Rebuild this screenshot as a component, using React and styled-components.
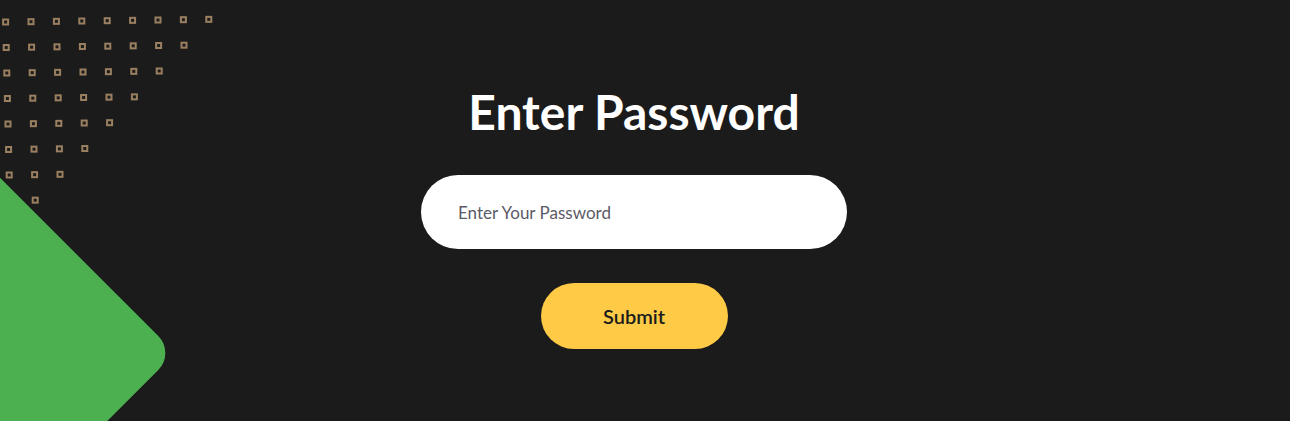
import React from "react";
import styled, { createGlobalStyle } from "styled-components";

const Global = createGlobalStyle`
  html, body { margin: 0; padding: 0; background: #1b1b1b; }
  body { font-family: Lato, "Open Sans", sans-serif; }
  * { box-sizing: border-box; }
`;

const Page = styled.main`
  position: relative;
  width: 1290px;
  height: 421px;
  overflow: hidden;
  background: #1b1b1b;
  display: flex;
  flex-direction: column;
  align-items: center;
  padding-top: 82px;
  padding-right: 22px;
`;

const Diamond = styled.div`
  position: absolute;
  width: 320px;
  height: 320px;
  left: ${175 - 160 * Math.SQRT2 - 160}px;
  top: ${353 - 160}px;
  background: #4caf50;
  border-radius: 24px;
  transform: rotate(45deg);
`;

const Dots = styled.svg`
  position: absolute;
  left: 0;
  top: 0;
  width: 240px;
  height: 220px;
`;

const Title = styled.h1`
  margin: 0;
  font-family: Lato, sans-serif;
  font-weight: 700;
  font-size: 48px;
  line-height: 60px;
  color: #ffffff;
  position: relative;
`;

const Form = styled.form`
  display: flex;
  flex-direction: column;
  align-items: center;
  gap: 34px;
  margin-top: 33px;
  position: relative;
`;

const Input = styled.input`
  width: 426px;
  height: 74px;
  border: none;
  border-radius: 37px;
  background: #ffffff;
  padding: 0 37px;
  font-family: Lato, sans-serif;
  font-size: 17px;
  color: #333;
  outline: none;
  &::placeholder { color: #5b5a66; }
`;

const Button = styled.button`
  width: 187px;
  height: 66px;
  border: none;
  border-radius: 33px;
  background: #ffcb47;
  font-family: Lato, sans-serif;
  font-weight: 600;
  font-size: 20px;
  color: #1b1b1b;
  cursor: pointer;
`;

const dots = [];
for (let r = 0; r <= 8; r++) {
  for (let c = 0; c < 10 - r; c++) {
    const x = 5 + 25.4 * c + 0.6 * r;
    const y = -3.5 + 25.5 * r - 0.33 * c;
    dots.push([x, y]);
  }
}

export default function App() {
  return (
    <>
      <Global />
      <Page>
        <Dots viewBox="0 0 240 220">
          {dots.map(([x, y], i) => (
            <rect
              key={i}
              x={x - 2.5}
              y={y - 2.5}
              width="5"
              height="5"
              fill="none"
              stroke="#9a8060"
              strokeWidth="2"
            />
          ))}
        </Dots>
        <Diamond />
        <Title>Enter Password</Title>
        <Form onSubmit={(e) => e.preventDefault()}>
          <Input type="password" placeholder="Enter Your Password" />
          <Button type="submit">Submit</Button>
        </Form>
      </Page>
    </>
  );
}
